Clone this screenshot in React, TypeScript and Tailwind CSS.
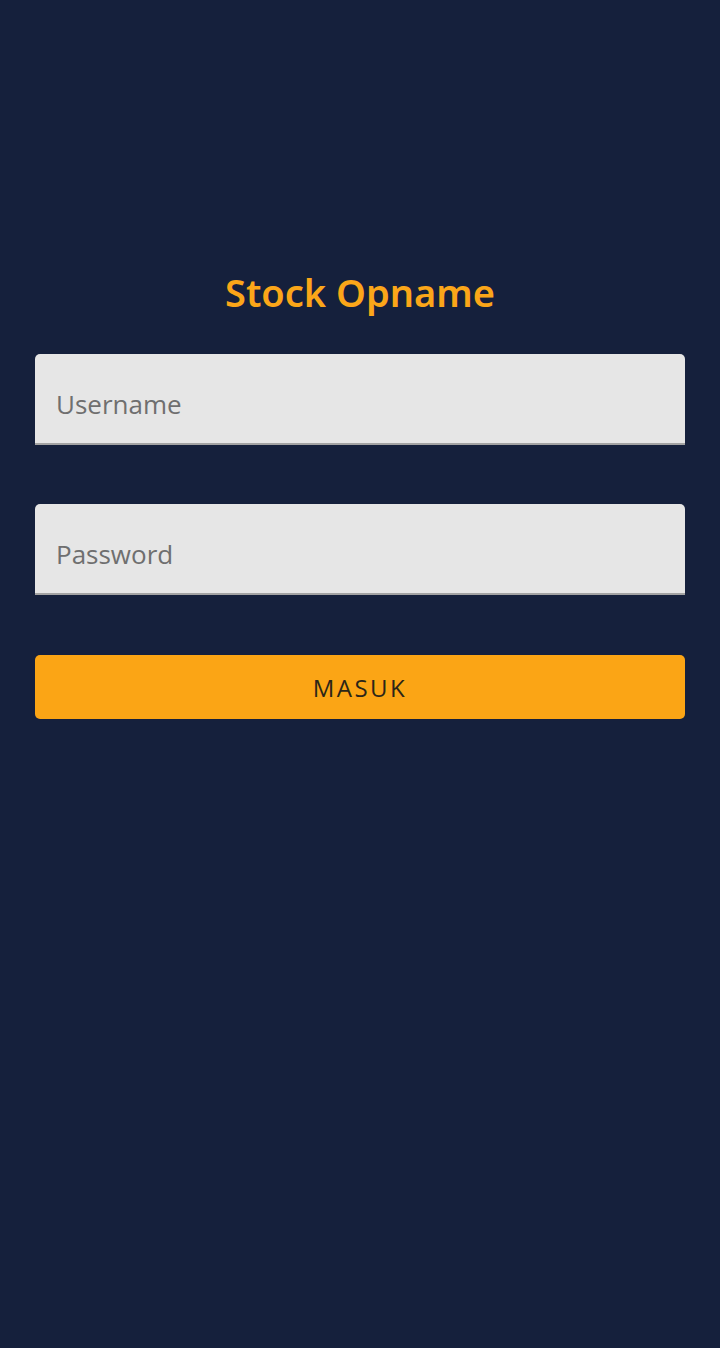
export default function App() {
  const fieldClass =
    "h-[91px] w-full rounded-t-[5px] border-b-2 border-[#a3a3a3] bg-[#e6e6e6] px-[21px] pt-[10px] font-['Open_Sans',sans-serif] text-[26px] text-[#333] outline-none placeholder:text-[#6f6f6f]"

  return (
    <div className="min-h-[1348px] w-full bg-[#15203c] px-[35px] pt-[266px] font-['Noto_Sans','Liberation_Sans',sans-serif]">
      <h1 className="text-center text-[38px] font-semibold leading-[52px] text-[#fba619]">Stock Opname</h1>
      <form className="mt-[36px] flex flex-col">
        <input type="text" placeholder="Username" className={fieldClass} />
        <input type="password" placeholder="Password" className={`mt-[59px] ${fieldClass}`} />
        <button
          type="button"
          className="mt-[60px] h-[64px] w-full rounded-[5px] bg-[#fba515] pt-[2px] font-['Open_Sans',sans-serif] text-[24px] tracking-[2.5px] text-[#2b2618]"
        >
          MASUK
        </button>
      </form>
    </div>
  )
}
